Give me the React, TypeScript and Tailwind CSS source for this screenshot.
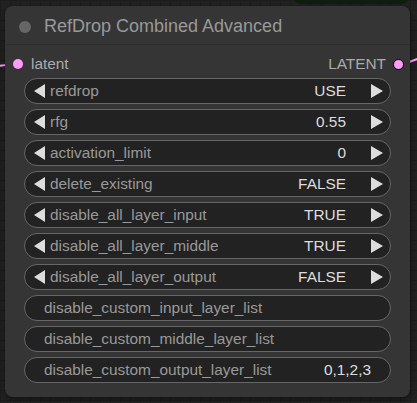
const combos: [string, string][] = [
  ["refdrop", "USE"],
  ["rfg", "0.55"],
  ["activation_limit", "0"],
  ["delete_existing", "FALSE"],
  ["disable_all_layer_input", "TRUE"],
  ["disable_all_layer_middle", "TRUE"],
  ["disable_all_layer_output", "FALSE"],
];

const texts: [string, string][] = [
  ["disable_custom_input_layer_list", ""],
  ["disable_custom_middle_layer_list", ""],
  ["disable_custom_output_layer_list", "0,1,2,3"],
];

function Arrow({ dir }: { dir: "left" | "right" }) {
  return (
    <svg width="12" height="14" viewBox="0 0 12 14" className="shrink-0">
      {dir === "left" ? (
        <polygon points="11,0 11,14 0,7" fill="#dddddd" />
      ) : (
        <polygon points="0,0 0,14 12,7" fill="#dddddd" />
      )}
    </svg>
  );
}

function ComboWidget({ label, value }: { label: string; value: string }) {
  return (
    <div className="h-[26px] rounded-full border border-[#666] bg-[#222] flex items-center pl-[9px] pr-[7px]">
      <Arrow dir="left" />
      <span className="ml-[4px] text-[#999] flex-1">{label}</span>
      <span className="text-[#ddd] mr-[25px]">{value}</span>
      <Arrow dir="right" />
    </div>
  );
}

function TextWidget({ label, value }: { label: string; value: string }) {
  return (
    <div className="h-[26px] rounded-full border border-[#666] bg-[#222] flex items-center pl-[19px] pr-[19px]">
      <span className="text-[#999] flex-1">{label}</span>
      <span className="text-[#ddd]">{value}</span>
    </div>
  );
}

export default function App() {
  return (
    <div
      className="relative w-[417px] h-[403px] overflow-hidden bg-[#222] bg-[linear-gradient(to_right,#1c1c1c_1px,transparent_1px),linear-gradient(to_bottom,#1c1c1c_1px,transparent_1px)] bg-[size:10px_10px] text-[15.4px]"
      style={{ fontFamily: '"Liberation Sans", Arial, sans-serif' }}
    >
      {/* group edge peeking at top */}
      <div className="absolute left-[293px] top-[-10px] w-[116px] h-[14px] rounded-b-[8px] bg-[#0f1e10]" />
      {/* links */}
      <div className="absolute left-0 top-[64px] w-[12px] h-[2px] bg-[#ff9cf9] rotate-[-8deg]" />
      <div className="absolute left-[404px] top-[60px] w-[16px] h-[2px] bg-[#ff9cf9] rotate-[-20deg]" />

      <div className="absolute left-[5px] top-[6px] w-[405px] h-[391px] rounded-[8px] bg-[#353535] shadow-[0_2px_6px_rgba(0,0,0,0.5)] flex flex-col">
        <div className="h-[39px] flex items-center border-b border-[#2d2d2d] pl-[14px] pt-[3px]">
          <span className="w-[12px] h-[12px] rounded-full bg-[#666]" />
          <span className="ml-[13px] text-[18px] text-[#999]">RefDrop Combined Advanced</span>
        </div>
        <div className="h-[30px] flex items-center pl-[8px] pr-[6px] pt-[8px]">
          <span className="w-[10px] h-[10px] rounded-full bg-[#ff9cf9]" />
          <span className="ml-[8px] flex-1 text-[#aaa]">latent</span>
          <span className="mr-[7px] text-[#aaa]">LATENT</span>
          <span className="w-[11px] h-[11px] rounded-full bg-[#ff9cf9] border-[1.5px] border-black" />
        </div>
        <div className="flex flex-col gap-[5px] px-[19px] pt-[3px]">
          {combos.map(([l, v]) => (
            <ComboWidget key={l} label={l} value={v} />
          ))}
          {texts.map(([l, v]) => (
            <TextWidget key={l} label={l} value={v} />
          ))}
        </div>
      </div>
    </div>
  );
}
